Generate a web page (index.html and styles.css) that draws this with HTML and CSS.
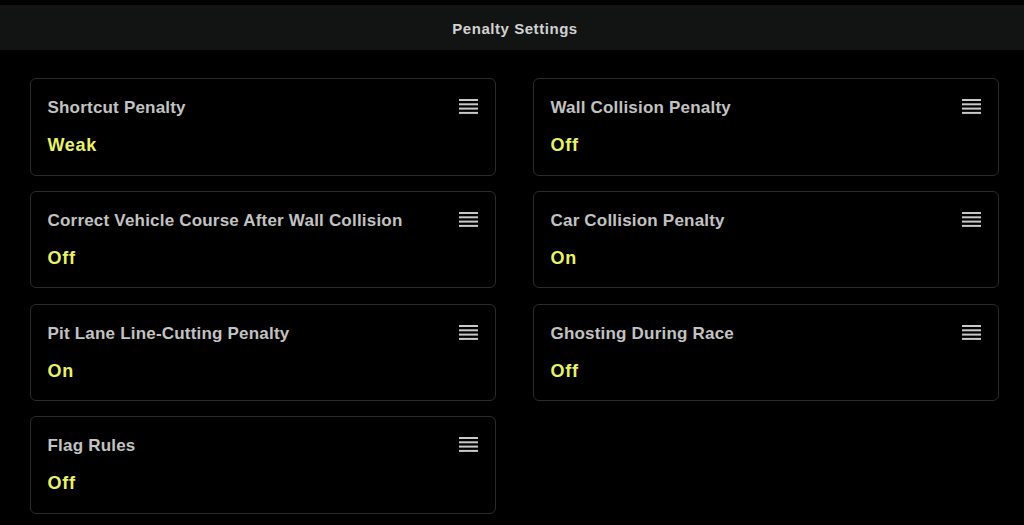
FILE: index.html
```html
<!DOCTYPE html>
<html>
<head>
<meta charset="utf-8">
<link rel="stylesheet" href="styles.css">
</head>
<body>
<div class="header">Penalty Settings</div>
<div class="grid">
  <div class="card"><div class="text"><div class="label">Shortcut Penalty</div><div class="value">Weak</div></div><svg class="menu" width="19" height="15" viewBox="0 0 19 15"><rect y="0" width="19" height="2"/><rect y="4.3" width="19" height="2"/><rect y="8.6" width="19" height="2"/><rect y="12.9" width="19" height="2"/></svg></div>
  <div class="card"><div class="text"><div class="label">Wall Collision Penalty</div><div class="value">Off</div></div><svg class="menu" width="19" height="15" viewBox="0 0 19 15"><rect y="0" width="19" height="2"/><rect y="4.3" width="19" height="2"/><rect y="8.6" width="19" height="2"/><rect y="12.9" width="19" height="2"/></svg></div>
  <div class="card"><div class="text"><div class="label">Correct Vehicle Course After Wall Collision</div><div class="value">Off</div></div><svg class="menu" width="19" height="15" viewBox="0 0 19 15"><rect y="0" width="19" height="2"/><rect y="4.3" width="19" height="2"/><rect y="8.6" width="19" height="2"/><rect y="12.9" width="19" height="2"/></svg></div>
  <div class="card"><div class="text"><div class="label">Car Collision Penalty</div><div class="value">On</div></div><svg class="menu" width="19" height="15" viewBox="0 0 19 15"><rect y="0" width="19" height="2"/><rect y="4.3" width="19" height="2"/><rect y="8.6" width="19" height="2"/><rect y="12.9" width="19" height="2"/></svg></div>
  <div class="card"><div class="text"><div class="label">Pit Lane Line-Cutting Penalty</div><div class="value">On</div></div><svg class="menu" width="19" height="15" viewBox="0 0 19 15"><rect y="0" width="19" height="2"/><rect y="4.3" width="19" height="2"/><rect y="8.6" width="19" height="2"/><rect y="12.9" width="19" height="2"/></svg></div>
  <div class="card"><div class="text"><div class="label">Ghosting During Race</div><div class="value">Off</div></div><svg class="menu" width="19" height="15" viewBox="0 0 19 15"><rect y="0" width="19" height="2"/><rect y="4.3" width="19" height="2"/><rect y="8.6" width="19" height="2"/><rect y="12.9" width="19" height="2"/></svg></div>
  <div class="card"><div class="text"><div class="label">Flag Rules</div><div class="value">Off</div></div><svg class="menu" width="19" height="15" viewBox="0 0 19 15"><rect y="0" width="19" height="2"/><rect y="4.3" width="19" height="2"/><rect y="8.6" width="19" height="2"/><rect y="12.9" width="19" height="2"/></svg></div>
</div>
</body>
</html>
```
FILE: styles.css
```css
html, body {
  margin: 0;
  padding: 0;
  background: #000;
  height: 100%;
  overflow: hidden;
}
body {
  font-family: "Liberation Sans", Arial, sans-serif;
}
.header {
  margin-top: 5px;
  height: 45px;
  background: #121414;
  color: #d2d2d2;
  font-size: 15px;
  font-weight: bold;
  letter-spacing: 0.55px;
  display: flex;
  align-items: center;
  justify-content: center;
  padding: 1px 0 0 6px;
  box-sizing: border-box;
}
.grid {
  display: grid;
  grid-template-columns: 466px 466px;
  column-gap: 37px;
  row-gap: 15.3px;
  padding: 28px 0 0 30px;
}
.card {
  height: 97.5px;
  box-sizing: border-box;
  border: 1.5px solid #2a2b2b;
  border-radius: 6px;
  display: flex;
  justify-content: space-between;
  align-items: flex-start;
  padding: 19px 17px 0 16.5px;
}
.label {
  color: #c2c2c2;
  font-size: 17px;
  font-weight: bold;
  letter-spacing: 0.2px;
  line-height: 20px;
}
.value {
  color: #e9f36a;
  font-size: 18px;
  font-weight: bold;
  letter-spacing: 0.7px;
  line-height: 20px;
  margin-top: 17px;
}
.menu {
  fill: #c8c8c8;
  margin-top: 1px;
}
```
